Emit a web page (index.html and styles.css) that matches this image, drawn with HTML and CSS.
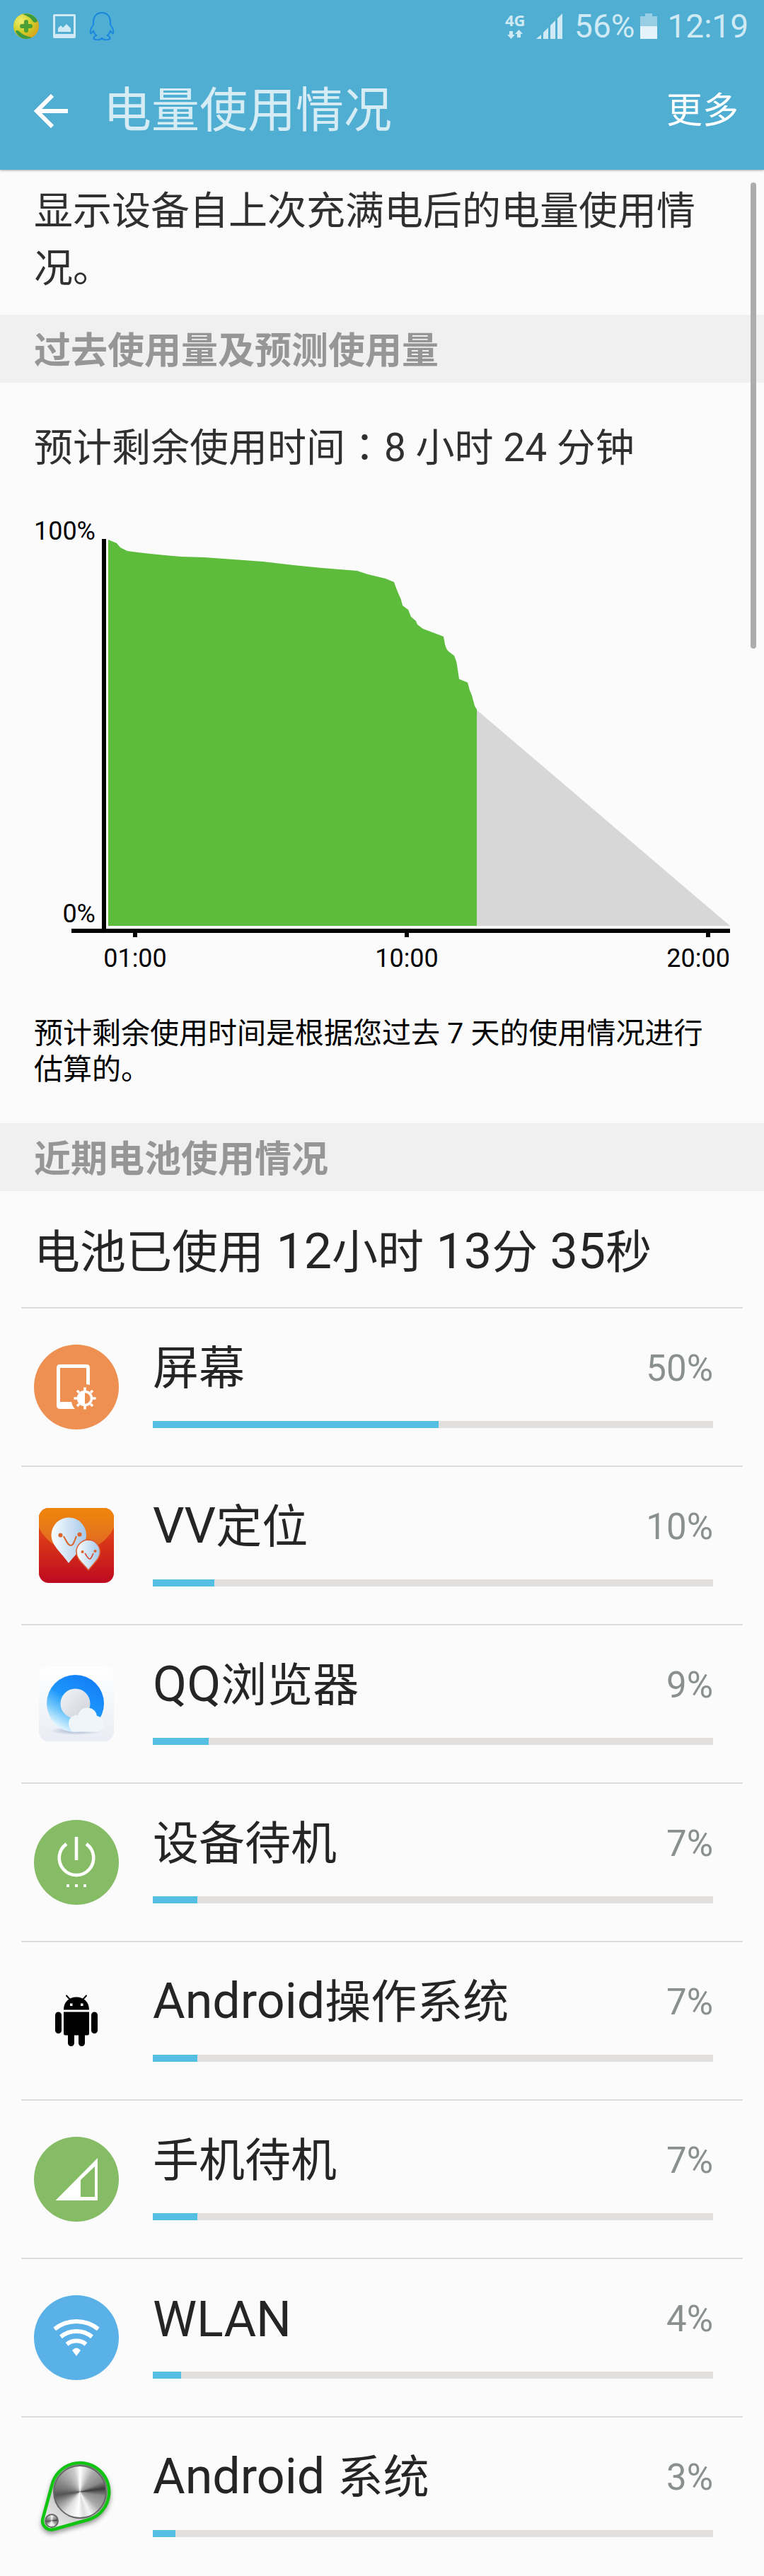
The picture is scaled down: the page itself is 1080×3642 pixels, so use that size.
FILE: index.html
```html
<!DOCTYPE html>
<html lang="zh-CN">
<head>
<meta charset="utf-8">
<meta name="viewport" content="width=device-width, initial-scale=1">
<title>电量使用情况</title>
<link rel="stylesheet" href="styles.css">
</head>
<body>
<header class="top">
  <div class="status">
    <div class="status-group notices">
      <svg width="36" height="36" viewBox="0 0 36 36" aria-hidden="true">
        <defs><radialGradient id="ball" cx=".3" cy=".3" r=".8"><stop offset="0" stop-color="#f0ee70"/><stop offset=".5" stop-color="#cfd02c"/><stop offset="1" stop-color="#d6a21c"/></radialGradient></defs>
        <circle cx="18" cy="18" r="18" fill="url(#ball)"/>
        <path d="M13 1C23-2 33 5 34 11C31 14 28 13 26 9C23 5 18 3 13 1Z" fill="#3d9a3f"/>
        <path d="M3 25C6 22 9 27 14 30C18 32 23 33 26 34C17 39 6 34 3 25Z" fill="#3d9a3f"/>
        <path d="M18 12V24M12 18H24" stroke="#4c9f35" stroke-width="6" stroke-linecap="round"/>
      </svg>
      <svg width="34" height="36" viewBox="0 0 34 36" aria-hidden="true">
        <path fill="#cfeaf4" fill-rule="evenodd" d="M3 1H31Q33 1 33 3V33Q33 35 31 35H3Q1 35 1 33V3Q1 1 3 1ZM4 4V29H30V4Z"/>
        <path d="M8 26V21L12 17L15 20L20 15L26 21V26Z" fill="#cfeaf4"/>
      </svg>
      <svg width="34" height="40" viewBox="0 0 34 40" aria-hidden="true">
        <path d="M17 1C9 1 5 7 5 14V18C2 22 0 27 1 30C2 31 4 28 5 26C5 29 7 31 9 33C5 35 4 38 8 39C12 40 15 39 17 37C19 39 22 40 26 39C30 38 29 35 25 33C27 31 29 29 29 26C30 28 32 31 33 30C34 27 32 22 29 18V14C29 7 25 1 17 1Z" fill="none" stroke="#1a86e0" stroke-width="2"/>
      </svg>
    </div>
    <div class="status-group">
      <svg class="net" width="30" height="46" viewBox="0 -10 30 46" role="img" aria-label="4G">
        <text x="0" y="18">4G</text>
        <path d="M6 25h5v5h3l-5.500 6l-5.500-6h3z M17 34v-5h-3l5.500-6l5.500 6h-3v5z"/>
      </svg>
      <svg class="signal" width="38" height="36" viewBox="0 0 38 36" aria-hidden="true">
        <path d="M0 36L7 30V36ZM10 27L17 20V36H10ZM20 17L27 10V36H20ZM30 7L37 0V36H30Z" fill="#cfeaf4"/>
      </svg>
      <span class="level">56%</span>
      <svg class="cell" width="24" height="36" viewBox="0 0 24 36" aria-hidden="true">
        <path d="M0 4H7V0H17V4H24V18H0Z" fill="#97cee3"/><path d="M0 18H24V36H0Z" fill="#e4f3f9"/>
      </svg>
      <time>12:19</time>
    </div>
  </div>
  <div class="appbar">
    <button class="back" type="button" aria-label="返回">
      <svg width="48" height="48" viewBox="0 0 48 48" aria-hidden="true"><path d="M26 2L4 24L26 46M4 24H48" fill="none" stroke="#fff" stroke-width="6"/></svg>
    </button>
    <h1>电量使用情况</h1>
    <button class="more" type="button">更多</button>
  </div>
</header>
<div class="scrollbar"></div>
<main>
  <p class="intro">显示设备自上次充满电后的电量使用情况。</p>

  <h2 class="band">过去使用量及预测使用量</h2>
  <section class="forecast">
    <p class="remaining">预计剩余使用时间<span class="colon" lang="ja">：</span>8 小时 24 分钟</p>
    <svg class="chart" viewBox="0 0 984 650" role="img" aria-label="电量图表">
      <path fill="#d7d7d7" d="M625 283L984 589H625Z"/>
      <path fill="#5dbc3c" d="M105 589V43L117 48L122 54L132 59L147 61L165 63L185 65L209 67L241 68L283 71L324 74L367 79L407 83L457 87L472 92L497 98L509 103L513 114L519 128L521 136L529 142L533 152L540 158L542 163L550 169L566 175L579 180L581 191L583 197L586 201L594 207L597 215L598 220L601 240L613 245L616 256L619 263L623 278L626 283V589Z"/>
      <path d="M96 42H102V593H984V599H956V605H950V599H530V605H524V599H146V605H140V599H53V593H96Z"/>
      <text class="end" x="87" y="43">100%</text>
      <text class="end" x="87" y="584">0%</text>
      <text class="mid" x="143" y="647">01:00</text>
      <text class="mid" x="527" y="647">10:00</text>
      <text class="end" x="984" y="647">20:00</text>
    </svg>
    <p class="note">预计剩余使用时间是根据您过去 7 天的使用情况进行估算的。</p>
  </section>

  <h2 class="band">近期电池使用情况</h2>
  <p class="elapsed">电池已使用<span class="latin"> 12</span>小时<span class="latin"> 13</span>分<span class="latin"> 35</span>秒</p>
  <ul class="apps">
    <li>
      <svg class="icon" viewBox="0 0 120 120" aria-hidden="true">
        <circle cx="60" cy="60" r="60" fill="#ee9051"/>
        <path fill="#fff" d="M37 28H74Q79 28 79 33V57L74 56V33H37V81H53Q54 87 58 91H37Q32 91 32 86V33Q32 28 37 28Z"/>
        <circle cx="72" cy="76" r="9.500" fill="none" stroke="#fff" stroke-width="3.500"/>
        <path d="M72 66A10 10 0 0 0 72 86Z" fill="#fff"/>
        <path d="M72 60.500V65M72 87V91.500M56.500 76H61M83 76H87.500M61 65L64 68M80 84L83 87M83 65L80 68M64 84L61 87" stroke="#fff" stroke-width="3.500"/>
      </svg>
      <div class="usage"><div class="line"><span>屏幕</span><span class="pct">50%</span></div><div class="bar"><div class="fill" style="width:51%"></div></div></div>
    </li>
    <li>
      <svg class="icon" viewBox="0 0 120 120" aria-hidden="true">
        <defs>
          <linearGradient id="vvRed" x2="0" y2="1"><stop offset="0" stop-color="#e8641a"/><stop offset=".45" stop-color="#d93518"/><stop offset="1" stop-color="#bd0a20"/></linearGradient>
          <linearGradient id="vvGlow" gradientUnits="userSpaceOnUse" x1="0" y1="7" x2="0" y2="68"><stop offset="0" stop-color="#ef860a"/><stop offset=".5" stop-color="#e8781a"/><stop offset="1" stop-color="#df6126"/></linearGradient>
          <linearGradient id="vvPin"><stop offset="0" stop-color="#fafdff"/><stop offset="1" stop-color="#a5c8ea"/></linearGradient>
          <clipPath id="vvClip"><rect x="7" y="7" width="106" height="106" rx="14"/></clipPath>
        </defs>
        <g clip-path="url(#vvClip)"><path d="M7 7H113V113H7Z" fill="url(#vvRed)"/><circle cx="60" cy="9" r="59" fill="url(#vvGlow)"/></g>
        <path d="M49 20.500A25 25 0 0 1 74 45C74 59 62 69 49 85C38 69 24.500 60 24.500 45A25 25 0 0 1 49 20.500Z" fill="url(#vvPin)"/>
        <path d="M77 52A17 17 0 0 1 93.500 69C93.500 79 85 84 77 95C68 84 60 79 60 69A17 17 0 0 1 77 52Z" fill="url(#vvPin)" stroke="#dc5a2c" stroke-width="1.500"/>
        <g fill="#d9652b"><circle cx="37.500" cy="45.500" r="3"/><circle cx="64.500" cy="44.500" r="3"/><circle cx="68.500" cy="69" r="2"/><circle cx="86.500" cy="68" r="2"/></g>
        <path d="M42 47C46 54 48 60 52 60C56 60 57 54 60 47" fill="none" stroke="#d9652b" stroke-width="2"/>
        <path d="M72 71C75 75 76 79 79 79C81 79 82 75 84 71" fill="none" stroke="#cf4326" stroke-width="1.500"/>
      </svg>
      <div class="usage"><div class="line"><span><span class="latin">VV</span>定位</span><span class="pct">10%</span></div><div class="bar"><div class="fill" style="width:11%"></div></div></div>
    </li>
    <li>
      <svg class="icon" viewBox="0 0 120 120" aria-hidden="true">
        <defs>
          <linearGradient id="qbTile" x2="0" y2="1"><stop offset="0" stop-color="#ffffff"/><stop offset="1" stop-color="#e9edf4"/></linearGradient>
          <linearGradient id="qbRing" x1=".9" y1=".1" x2=".35" y2="1"><stop offset="0" stop-color="#147df8"/><stop offset=".5" stop-color="#1c96fb"/><stop offset=".75" stop-color="#6fc6fa"/><stop offset="1" stop-color="#e3f6fe"/></linearGradient>
          <linearGradient id="qbHole" x2="1" y2="1"><stop offset="0" stop-color="#f2f4f6"/><stop offset="1" stop-color="#cdd2da"/></linearGradient>
          <radialGradient id="qbShade"><stop offset="0" stop-color="#9fadc8"/><stop offset="1" stop-color="#9fadc8" stop-opacity="0"/></radialGradient>
        </defs>
        <rect x="7" y="7" width="106" height="106" rx="14" fill="url(#qbTile)"/>
        <ellipse cx="60" cy="98" rx="38" ry="6" fill="url(#qbShade)"/>
        <circle cx="58.500" cy="59.500" r="40.500" fill="url(#qbRing)"/>
        <circle cx="58.500" cy="59.500" r="21" fill="url(#qbHole)"/>
        <path d="M55 99.500C48 96 46 80 56 77C59 75 61 76 62 77C64 69 69 65.500 75 65.500C83 65.500 88 70 89 77C95 78 99 83 99 88.500C99 95 95 99.500 89 99.500Z" fill="#eff5f9"/>
      </svg>
      <div class="usage"><div class="line"><span><span class="latin">QQ</span>浏览器</span><span class="pct">9%</span></div><div class="bar"><div class="fill" style="width:10%"></div></div></div>
    </li>
    <li>
      <svg class="icon" viewBox="0 0 120 120" aria-hidden="true">
        <circle cx="60" cy="60" r="60" fill="#86bc66"/>
        <path d="M46 34A24.300 24.300 0 1 0 74 34M60 24V57" fill="none" stroke="#fff" stroke-width="4.600"/>
        <path d="M46 91h4v4h-4zM58 91h4v4h-4zM70 91h4v4h-4z" fill="#fff"/>
      </svg>
      <div class="usage"><div class="line"><span>设备待机</span><span class="pct">7%</span></div><div class="bar"><div class="fill" style="width:8%"></div></div></div>
    </li>
    <li>
      <svg class="icon" viewBox="0 0 120 120" aria-hidden="true">
        <path d="M42 44.500C42 33 50 26.500 60 26.500S78 33 78 44.500ZM42 47.500H78V78Q78 80.500 75.500 80.500H72V91.500A4.500 4.500 0 0 1 63 91.500V80.500H57V91.500A4.500 4.500 0 0 1 48 91.500V80.500H44.500Q42 80.500 42 78Z"/>
        <rect x="30" y="47.500" width="9" height="30.500" rx="4.500"/><rect x="81" y="47.500" width="9" height="30.500" rx="4.500"/>
        <path d="M46 24.500L51 30M74 24.500L69 30" stroke="#000" stroke-width="2" stroke-linecap="round"/>
        <path d="M51 35.500h3.500v3.500h-3.500zM66 35.500h3.500v3.500h-3.500z" fill="#fff"/>
      </svg>
      <div class="usage"><div class="line"><span><span class="latin">Android</span>操作系统</span><span class="pct">7%</span></div><div class="bar"><div class="fill" style="width:8%"></div></div></div>
    </li>
    <li>
      <svg class="icon" viewBox="0 0 120 120" aria-hidden="true">
        <circle cx="60" cy="60" r="60" fill="#86bc66"/>
        <path fill="#fff" fill-rule="evenodd" d="M30.500 90L90 30V90ZM66 61V85H86V42Z"/>
      </svg>
      <div class="usage"><div class="line"><span>手机待机</span><span class="pct">7%</span></div><div class="bar"><div class="fill" style="width:8%"></div></div></div>
    </li>
    <li>
      <svg class="icon" viewBox="0 0 120 120" aria-hidden="true">
        <circle cx="60" cy="60" r="60" fill="#5ab1e8"/>
        <path d="M29.200 47.900A49 49 0 0 1 90.800 47.900M38 58.800A35 35 0 0 1 82 58.800M46.500 69.300A21.500 21.500 0 0 1 73.500 69.300" fill="none" stroke="#fff" stroke-width="6"/>
        <path d="M60 86L54 78Q60 71 66 78Z" fill="#fff"/>
      </svg>
      <div class="usage"><div class="line"><span class="latin">WLAN</span><span class="pct">4%</span></div><div class="bar"><div class="fill" style="width:5%"></div></div></div>
    </li>
    <li>
      <svg class="icon" viewBox="0 0 120 120" aria-hidden="true">
        <defs>
          <linearGradient id="plate" x1=".9" x2=".1" y2="1"><stop offset="0" stop-color="#777"/><stop offset="1" stop-color="#f4f4f4"/></linearGradient>
          <filter id="soft" x="-20%" y="-20%" width="140%" height="140%"><feGaussianBlur stdDeviation="3"/></filter>
        </defs>
        <path d="M12.600 91.700L25.700 43.300A41 41 0 1 1 76.400 93.500L28.100 107A12.500 12.500 0 0 1 12.600 91.700Z" fill="#555" stroke="#555" stroke-width="4" opacity=".6" filter="url(#soft)" transform="translate(0 4)"/>
        <path d="M12.600 91.700L25.700 43.300A41 41 0 1 1 76.400 93.500L28.100 107A12.500 12.500 0 0 1 12.600 91.700Z" fill="url(#plate)" stroke="#12c412" stroke-width="4.500"/>
        <foreignObject x="27" y="16" width="76" height="76"><div class="dial"></div></foreignObject>
        <foreignObject x="15" y="85" width="20" height="20"><div class="dial"></div></foreignObject>
      </svg>
      <div class="usage"><div class="line"><span><span class="latin">Android </span>系统</span><span class="pct">3%</span></div><div class="bar"><div class="fill" style="width:4%"></div></div></div>
    </li>
  </ul>
</main>
</body>
</html>
```
FILE: styles.css
```css
* { box-sizing: border-box; }

body {
  margin: 0;
  position: relative;
  background: #fbfbfb;
  color: #252525;
  font-family: Roboto, "Noto Sans CJK SC", sans-serif;
}

h1, h2, p, ul { margin: 0; padding: 0; font-weight: 400; }

button {
  padding: 0;
  border: 0;
  background: none;
  color: inherit;
  font: inherit;
}

svg { display: block; flex: none; }

/* Header */
.top {
  background: #4faed1;
  color: #d5ecf5;
  box-shadow: 0 1px 3px rgba(0, 0, 0, 0.35);
}

.status {
  display: flex;
  justify-content: space-between;
  align-items: center;
  height: 74px;
  padding: 0 22px 0 19px;
  font-size: 46px;
  line-height: 54px;
  color: #cfeaf4;
}

.status-group { display: flex; align-items: center; }
.notices { gap: 19px; }
.net { margin-right: 14px; margin-bottom: 10px; fill: #cfeaf4; overflow: visible; }
.net text { font: bold 22px "Open Sans", sans-serif; }
.signal { margin-right: 16px; }
.level { margin-right: 8px; }
.cell { margin-right: 14px; }

.appbar {
  display: flex;
  align-items: center;
  height: 166px;
  padding: 0 36px 0 48px;
}

.appbar h1 { flex: 1; margin-left: 50px; font-size: 68px; line-height: 80px; }
.more { font-size: 51px; line-height: 60px; color: #fff; }

.scrollbar {
  position: absolute;
  top: 258px;
  right: 11px;
  width: 8px;
  height: 659px;
  border-radius: 4px;
  background: #acaeae;
}

/* Text blocks */
.intro { padding: 18px 48px 25px; font-size: 55px; line-height: 81px; color: #303030; }

.band {
  padding: 8px 48px 0;
  background: #f0f0f0;
  color: #969696;
  font-size: 52px;
  font-weight: 700;
  line-height: 88px;
}

.latin, .colon { line-height: 1; }

.forecast { padding: 52px 48px 50px; }
.remaining { font-size: 55px; line-height: 80px; color: #303030; }
.colon { font-family: "Noto Sans CJK JP", sans-serif; }

.chart { width: 100%; margin-top: 47px; overflow: visible; }
.chart text { font-size: 36px; }
.chart .end { text-anchor: end; }
.chart .mid { text-anchor: middle; }

.note { margin-top: 66px; color: #000; font-size: 41px; line-height: 51px; }

.elapsed { padding: 10px 48px 0; font-size: 65px; line-height: 154px; }
.elapsed .latin { font-size: 70px; }

/* App list */
.apps { list-style: none; margin: 0 30px; }

.apps li {
  display: flex;
  align-items: center;
  gap: 48px;
  min-height: 224px;
  padding: 0 42px 0 18px;
  border-top: 2px solid #dcdcdc;
}

.icon { width: 120px; height: 120px; }

.usage { flex: 1; padding-bottom: 8px; }

.line {
  display: flex;
  justify-content: space-between;
  align-items: center;
  height: 80px;
  font-size: 65px;
  line-height: 80px;
}

.line .latin { font-size: 70px; }
.line .pct { font-size: 51px; color: #8a8f8f; }

.bar { height: 10px; margin-top: 34px; background: #e1e0df; }
.fill { height: 100%; background: #54bfe3; }

.dial {
  width: 100%;
  height: 100%;
  border: 2px solid #666;
  border-radius: 50%;
  background: conic-gradient(#fff, #aaa 35deg, #888 65deg, #3c3c3c 82deg, #8a8a8a 100deg, #aaa 130deg, #f4f4f4 155deg, #ddd 170deg, #fff 185deg, #ddd 215deg, #888 245deg, #555 262deg, #777 280deg, #aaa 320deg, #ccc 345deg, #fff);
}
```
